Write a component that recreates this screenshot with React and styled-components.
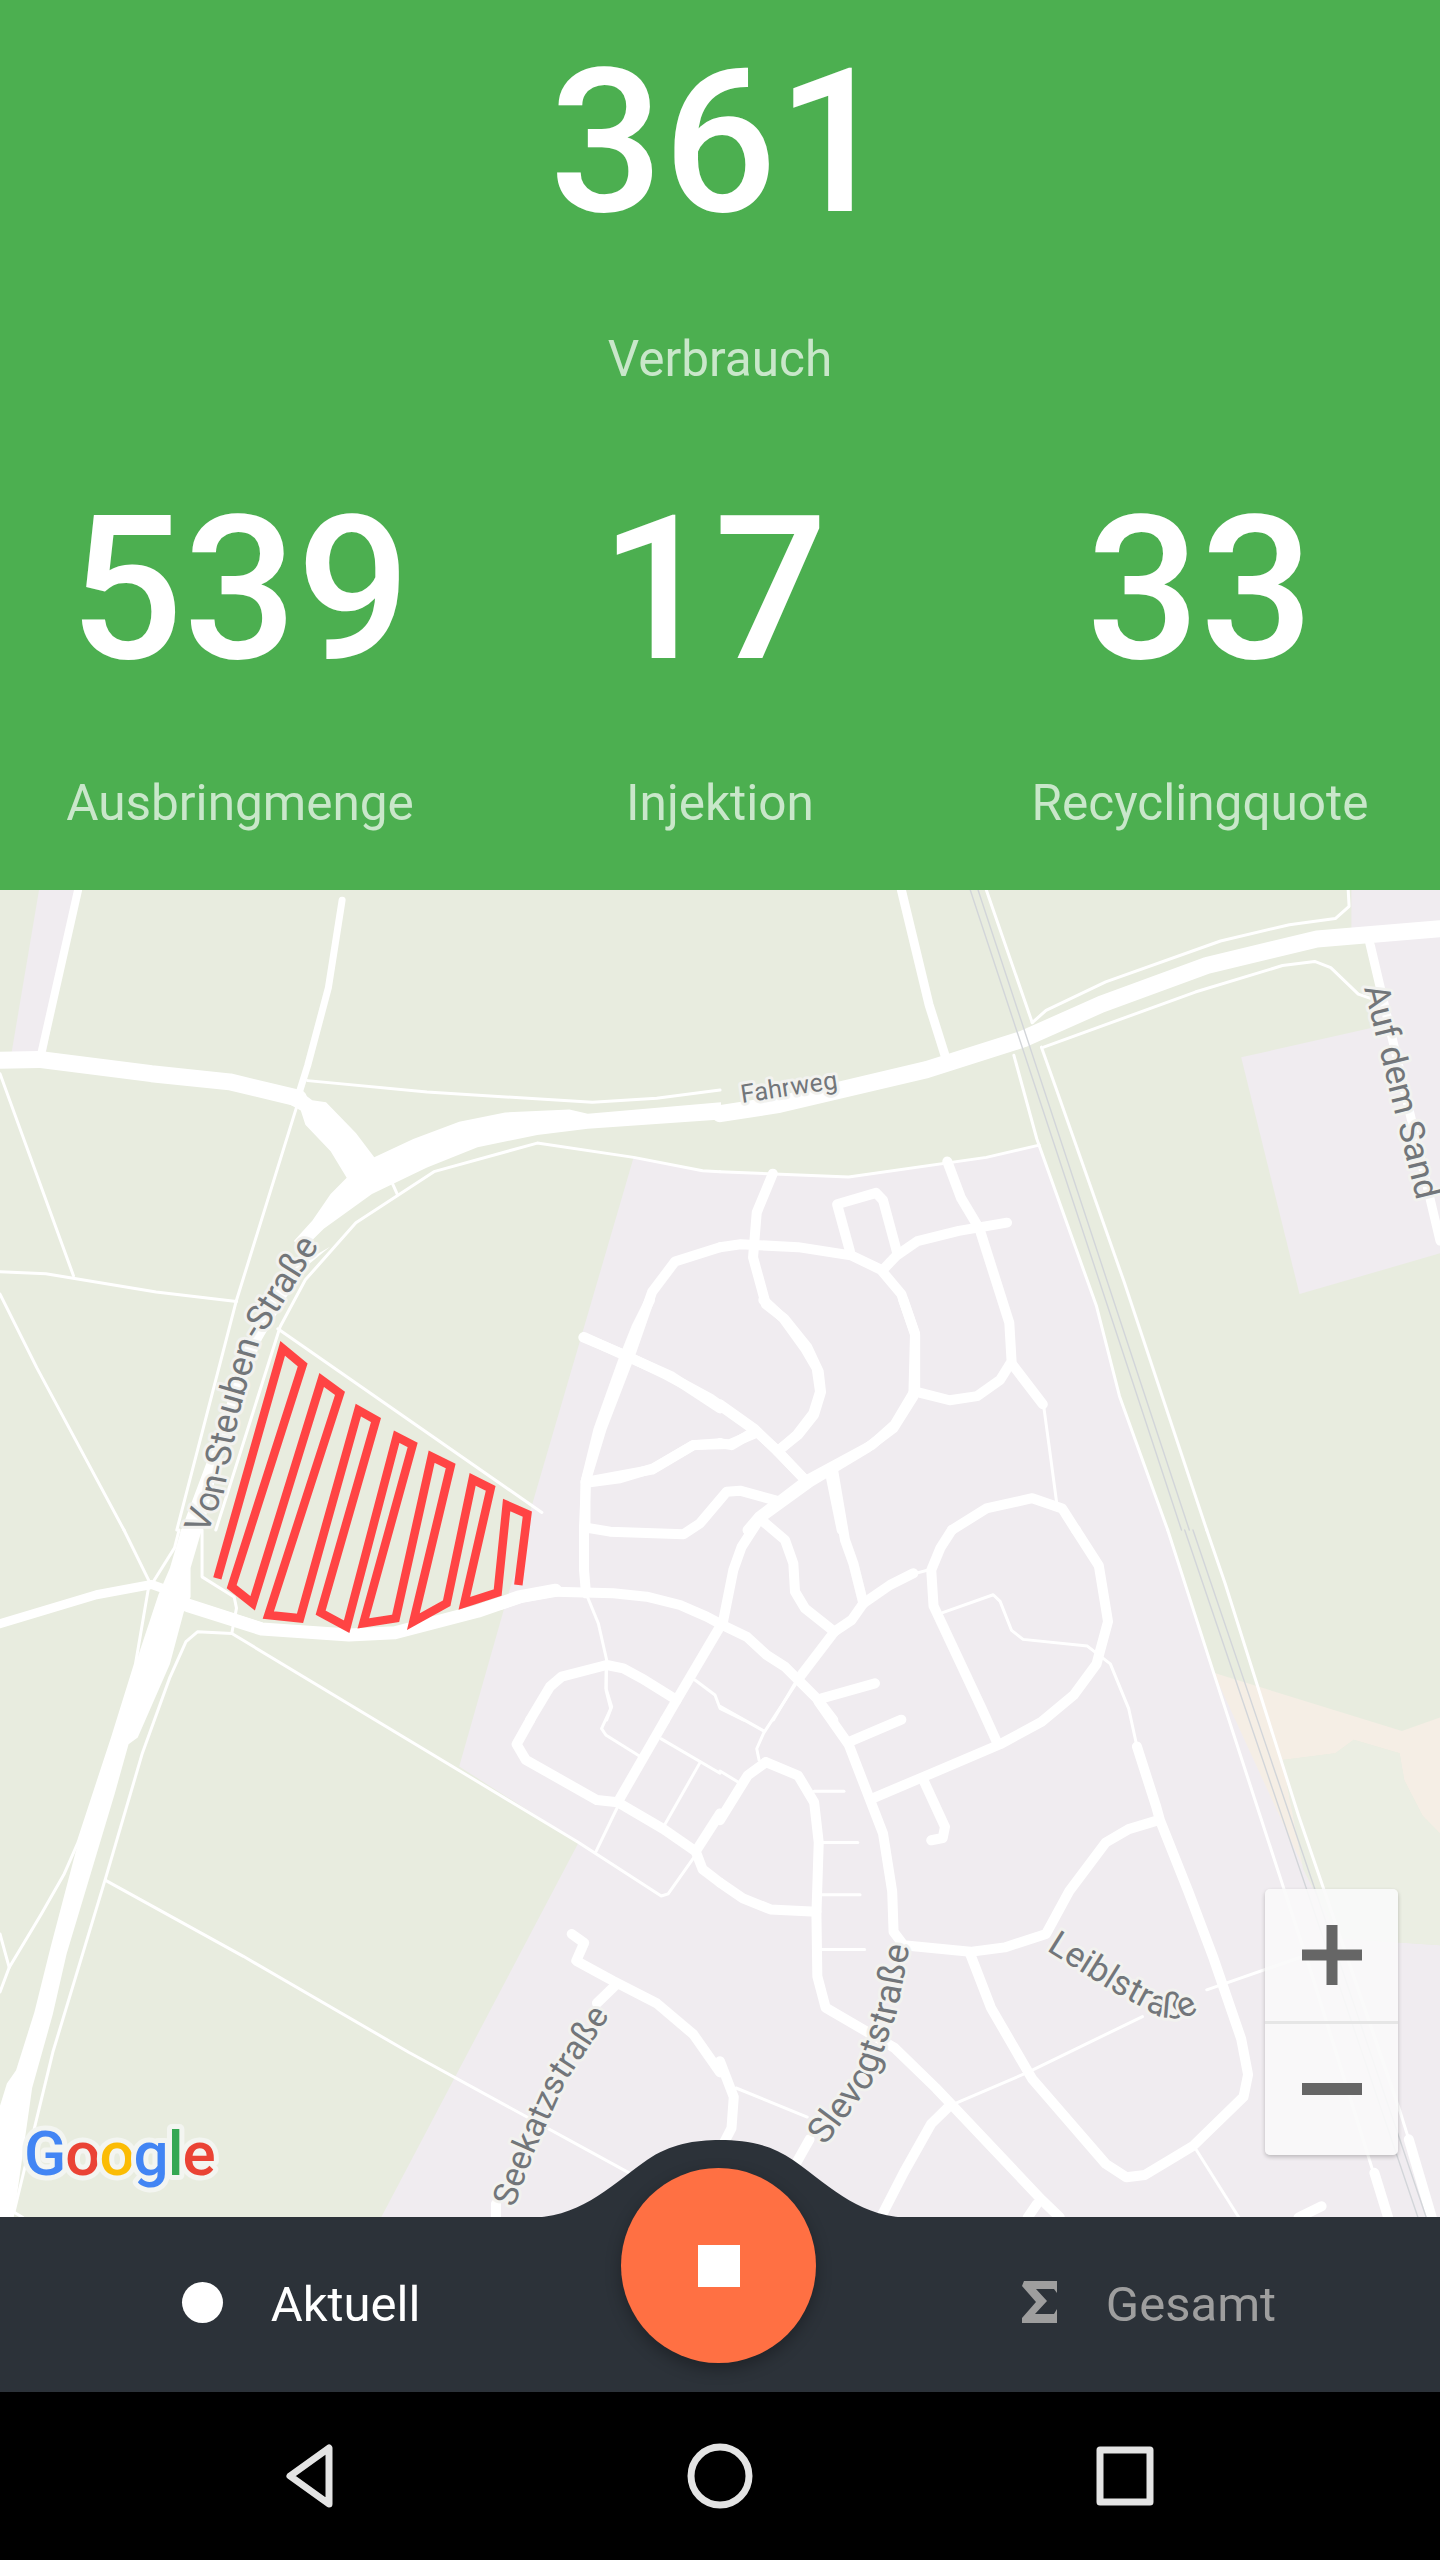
import React from 'react';
import styled, { createGlobalStyle } from 'styled-components';

const GlobalStyle = createGlobalStyle`
  html, body {
    margin: 0;
    padding: 0;
    background: #000;
  }
  body {
    font-family: Roboto, "Liberation Sans", sans-serif;
  }
`;

const Page = styled.div`
  width: 1440px;
  height: 2560px;
  display: flex;
  flex-direction: column;
  overflow: hidden;
`;

/* ---------- stats header ---------- */

const Header = styled.header`
  height: 890px;
  box-sizing: border-box;
  padding-top: 26px;
  background: #4caf50;
  display: grid;
  grid-template-columns: repeat(3, 480px);
  grid-template-rows: 447px 1fr;
  justify-items: center;
`;

const Stat = styled.div`
  grid-column: ${p => p.$column};
  grid-row: ${p => p.$row};
  display: flex;
  flex-direction: column;
  align-items: center;
  white-space: nowrap;
`;

const Value = styled.div`
  font-size: 200px;
  font-weight: 500;
  line-height: 234px;
  color: #fff;
  margin-bottom: ${p => p.$gap}px;
  padding-right: ${p => p.$nudge || 0}px;
`;

const Label = styled.div`
  font-size: 49.5px;
  line-height: 56px;
  color: #c9e7ca;
`;

/* ---------- map ---------- */

const MapArea = styled.section`
  position: relative;
  height: 1327px;
  background: #e8ecdf;
  overflow: hidden;
`;

const MapSvg = styled.svg`
  display: block;
  width: 1440px;
  height: 1327px;
`;

const Area = styled.polygon`
  fill: ${p => p.$fill || '#f0ecf0'};
`;

const Road = styled.polyline`
  fill: none;
  stroke: ${p => p.$color || '#fff'};
  stroke-width: ${p => p.$w}px;
  stroke-linecap: round;
  stroke-linejoin: round;
  vector-effect: non-scaling-stroke;
`;

const Wide = styled.polygon`
  fill: #fff;
`;

const Track = styled.polyline`
  fill: none;
  stroke: #ff4444;
  stroke-width: 8.5px;
  stroke-linejoin: miter;
  stroke-miterlimit: 3;
  vector-effect: non-scaling-stroke;
`;

const StreetName = styled.text`
  font-family: Roboto, "Liberation Sans", sans-serif;
  font-size: ${p => p.$size}px;
  fill: #72767a;
  stroke: #f2f2ef;
  stroke-width: 6px;
  stroke-linejoin: round;
  paint-order: stroke;
`;

const GoogleMark = styled.text`
  font-family: Roboto, "Liberation Sans", sans-serif;
  font-size: 62px;
  font-weight: 500;
  letter-spacing: -1px;
  stroke: #f3f5f1;
  stroke-width: 10px;
  stroke-linejoin: round;
  paint-order: stroke;
`;

const ZoomBox = styled.div`
  position: absolute;
  right: 42px;
  bottom: 62px;
  width: 133px;
  height: 266px;
  border-radius: 5px;
  background: rgba(250, 250, 250, 0.9);
  box-shadow: 0 2px 4px rgba(0, 0, 0, 0.22);
  display: flex;
  flex-direction: column;
`;

const ZoomButton = styled.div`
  flex: 1;
  display: flex;
  align-items: center;
  justify-content: center;
  color: #666;
  & + & {
    border-top: 3px solid #e6e6e6;
  }
`;

/* ---------- bottom bar ---------- */

const BottomBar = styled.nav`
  position: relative;
  height: 175px;
  background: #2c3239;
  display: grid;
  grid-template-columns: 602px 1fr 582px;
  align-items: center;
`;

const Hump = styled.svg`
  position: absolute;
  left: 525px;
  top: -77px;
  width: 390px;
  height: 78px;
`;

const Tab = styled.div`
  grid-column: ${p => p.$column};
  display: flex;
  align-items: center;
  justify-content: center;
  gap: 48px;
  font-size: 49px;
  line-height: 56px;
  color: ${p => (p.$active ? '#fff' : '#9e9e9e')};
`;

const Dot = styled.span`
  width: 41px;
  height: 41px;
  border-radius: 50%;
  background: currentColor;
  margin-top: -5px;
`;

const TabIcon = styled.svg`
  width: 36px;
  height: 42px;
  margin-top: -5px;
  fill: currentColor;
`;

const Fab = styled.button`
  position: absolute;
  left: 621px;
  top: -49px;
  width: 195px;
  height: 195px;
  border: 0;
  padding: 0;
  border-radius: 50%;
  background: #ff7043;
  box-shadow: 0 6px 16px rgba(0, 0, 0, 0.3);
  display: flex;
  align-items: center;
  justify-content: center;
`;

const StopMark = styled.span`
  width: 42px;
  height: 42px;
  background: #fff;
`;

/* ---------- android nav ---------- */

const SystemNav = styled.div`
  height: 168px;
  background: #000;
  display: flex;
  align-items: center;
  justify-content: center;
  gap: 333px;
`;

const NavIcon = styled.svg`
  width: 72px;
  height: 72px;
  fill: none;
  stroke: #e4e4e4;
  stroke-width: 7px;
  stroke-linejoin: round;
`;

/* map drawing: points were read off crops of the map, each with its own origin and scale */

const A = { x: 0, y: 890, sx: 0.4592, sy: 0.4082 };
const B = { x: 720, y: 890, sx: 0.4592, sy: 0.4082 };
const C = { x: 0, y: 1530, sx: 0.4592, sy: 0.4464 };
const D = { x: 720, y: 1530, sx: 0.4592, sy: 0.4464 };
const E = { x: 130, y: 1240, sx: 1 / 3, sy: 1 / 3 };
const F = { x: 500, y: 1300, sx: 1 / 3, sy: 1 / 3 };

const Tile = ({ t, children }) => (
  <g transform={`translate(${t.x} ${t.y}) scale(${t.sx} ${t.sy})`}>{children}</g>
);

const AREAS = [
  [A, '85,0 165,0 100,400 25,400'],
  [A, '1380,655 1530,690 1568,690 1570,1570 1142,1570'],
  [B, '-2,690 280,703 580,655 695,625 820,1020 870,1240 975,1570 -2,1570'],
  [B, '1375,0 1568,0 1568,85 1375,95'],
  [B, '1425,120 1568,110 1568,890 1262,990 1135,410 1430,335'],
  [C, '1150,0 1105,150 1000,530 1260,700 830,1540 1570,1540 1570,0'],
  [D, '0,-2 975,-2 1075,320 1180,360 1290,800 1350,915 1568,930 1568,1540 0,1540'],
  [D, '1075,320 1485,450 1568,420 1568,680 1530,640 1490,560 1480,500 1380,470 1340,500 1225,515 1240,600 1270,760 1290,800', '#f5eee5'],
  [D, '1225,515 1340,500 1380,470 1480,500 1490,560 1530,640 1568,680 1568,930 1350,915 1290,800 1270,760 1240,600', '#ebeee3'],
];

const WIDE = [
  [A, '650,490 680,515 710,520 775,595 815,655 900,610 1000,568 1100,545 1240,538 1280,548 1570,520 1570,562 1280,585 1170,600 1040,630 930,680 810,745 705,830 660,880 640,860 680,810 720,745 755,705 720,640 665,575 655,540 630,525'],
  [C, '395,-2 440,-2 415,85 415,150 400,185 370,300 300,465 280,480 250,590 145,950 115,1085 70,1250 30,1540 0,1540 0,1290 15,1240 35,1210 75,1080 110,935 165,720 250,450 295,300 345,145 370,85'],
  [E, '150,880 215,880 260,700 330,470 395,300 470,170 540,70 600,20 480,90 395,210 335,340 270,560'],
];

const ROADS = [
  // top left
  [A, 17, '0,417 85,415 330,450 500,470 650,510'],
  [A, 8, '170,0 90,400'],
  [A, 7, '745,25 715,240 670,430 652,495'],
  [A, 3, '0,450 160,945'],
  [A, 3, '0,935 100,940 340,985 515,1008'],
  [A, 3, '645,535 515,1005 385,1568'],
  [A, 3, '0,990 80,1170 270,1568'],
  [A, 3, '670,467 930,495 1290,520 1430,510 1568,490'],
  [A, 3, '1568,690 1530,688 1380,655 1170,620 945,690 775,815 665,955 610,1070 470,1568'],
  [A, 3, '855,720 865,745'],
  [A, 3, '605,1075 1180,1525'],
  [A, 10, '1272,1095 1360,1140 1460,1190 1568,1270'],
  [A, 10, '1275,1568 1275,1450 1310,1320 1375,1130 1420,985 1470,910 1568,875'],
  [A, 10, '1275,1450 1420,1420 1510,1360 1568,1355'],
  // top right
  [B, 17, '0,548 130,525 450,440 660,365 830,280 1060,185 1300,120 1568,95'],
  [B, 9, '395,0 455,280 490,405'],
  [B, 3, '580,0 680,325'],
  [B, 3, '680,325 710,295 840,225 1090,125 1240,85 1340,70 1370,40 1368,0'],
  [B, 3, '705,385 1035,250 1225,185 1295,175 1330,190 1390,255 1415,265'],
  [B, 3, '640,405 690,610 820,1020 870,1240 975,1568'],
  [B, 3, '700,385 730,480 880,960 1060,1568'],
  [B, 3, '0,690 280,703 580,655 695,625'],
  [B, 9, '1415,130 1568,860'],
  [B, 10, '0,875 45,868 170,875 285,895 350,930 395,990 425,1090 425,1225 380,1310 330,1360 190,1445 85,1535 60,1568'],
  [B, 10, '115,695 80,790 72,900 100,1015 140,1050 190,1120 215,1180 220,1230 205,1285 170,1335 125,1375'],
  [B, 10, '0,1260 75,1320 125,1375 190,1450'],
  [B, 10, '0,1355 25,1360 70,1330'],
  [B, 10, '495,665 525,755 565,830 630,1060 635,1155 610,1200 560,1240 500,1250 430,1230'],
  [B, 10, '635,1160 703,1260'],
  [B, 3, '705,1265 720,1390 733,1500'],
  [B, 10, '355,930 385,895 430,860 520,835 625,815'],
  [B, 10, '283,885 255,770 340,742 355,760 385,885'],
  [B, 10, '240,1430 265,1568'],
  [B, 10, '505,1568 580,1515 680,1490 745,1515 775,1568'],
  // lower left
  [C, 9, '0,210 210,145 330,122 380,140'],
  [C, 13, '410,170 570,222 760,235 860,230 1040,182 1130,150 1210,135'],
  [C, 3, '405,155 570,210'],
  [C, 3, '440,0 440,105 510,150 515,175 505,230'],
  [C, 3, '505,232 430,228 405,250 370,330 310,500 230,780 115,1170 30,1530'],
  [C, 3, '505,232 1260,700 1440,820 1455,815 1510,735'],
  [C, 3, '1297,722 1345,620'],
  [C, 3, '230,785 530,955 890,1170 1370,1440'],
  [C, 3, '330,122 380,40 390,0'],
  [C, 3, '325,120 295,300 245,465 170,700 140,770 90,860 20,980 0,1035'],
  [C, 3, '0,905 20,980'],
  [C, 3, '270,0 325,115'],
  [C, 3, '25,1525 50,1540'],
  [C, 10, '1245,905 1272,925 1255,965 1335,1010 1430,1060 1510,1130 1568,1215'],
  [C, 10, '1340,1020 1300,1060'],
  [C, 10, '1080,1510 1080,1540'],
  [C, 10, '1155,425 1125,480 1145,515 1300,605 1345,610 1445,670 1515,720 1530,760 1568,790'],
  [C, 10, '1448,426 1345,610'],
  [C, 10, '1515,720 1568,635'],
  [C, 3, '1440,468 1568,545'],
  [C, 3, '1525,520 1445,665'],
  [C, 3, '1320,300 1320,360 1330,400 1310,445 1320,460 1395,508'],
  // town centre
  [F, 10, '250,112 375,165 500,225 630,295 770,395 830,450 925,550'],
  [F, 10, '450,0 410,80 370,180 295,390 258,540 252,680 252,810 258,880'],
  [F, 10, '258,548 360,535 460,505 580,435 690,432 765,400'],
  [F, 10, '258,683 330,695 550,703 600,670 680,575 720,572 840,605'],
  [F, 10, '790,0 850,55 915,145 950,205 960,275 940,340 890,405 838,450'],
  [F, 10, '780,655 925,550 1100,445 1180,385 1240,290 1245,100 1210,0'],
  [F, 10, '780,655 725,740 700,810 667,975'],
  [F, 10, '790,665 855,720 880,790 885,875 915,925 1003,995'],
  [F, 10, '1003,995 1055,960 1090,910 1060,790 1035,720 1000,515'],
  [F, 10, '1090,910 1170,855 1240,820'],
  [F, 10, '0,915 70,892 165,875 340,880 440,890 540,915 620,950 667,975 740,1010 800,1065 855,1100 950,1195 1000,1260'],
  [F, 10, '660,980 530,1200 495,1260'],
  [F, 10, '1003,995 900,1130'],
  [F, 3, '885,1150 820,1260'],
  [F, 10, '965,1195 1125,1150'],
  [F, 10, '90,1260 150,1160 185,1130 320,1095 370,1105 425,1135 530,1200'],
  [F, 3, '260,885 295,970 320,1080 318,1165 335,1220 320,1260'],
  [F, 3, '585,1140 645,1185 660,1225 730,1260'],
  // lower right
  [D, 10, '505,0 480,40 460,90 465,170 570,400 605,480'],
  [D, 10, '775,0 825,80 845,205 820,300 770,370 700,430 610,480 450,550 335,600'],
  [D, 3, '415,100 460,88'],
  [D, 3, '485,185 595,145 610,160 635,225 660,245 800,260 850,300 890,400 908,485'],
  [D, 10, '908,485 950,620 958,650 1020,810 1075,960 1135,1140 1150,1220 1140,1270 1030,1380 925,1445 885,1450 840,1420 680,1230 590,1070 545,950'],
  [D, 10, '955,650 890,670 840,700 760,810 710,905 620,935 545,945 400,930 378,900 375,810 355,680 280,480 215,385'],
  [D, 10, '445,565 490,665 485,690 460,695'],
  [D, 10, '280,475 395,425'],
  [D, 10, '100,520 170,550 205,610 215,700 210,860 212,1000 230,1070 380,1160 470,1250 700,1500 740,1540'],
  [D, 10, '100,520 60,550 0,650'],
  [D, 10, '0,790 50,825 110,850 210,855'],
  [D, 3, '205,585 270,585'],
  [D, 3, '220,700 300,700'],
  [D, 3, '220,817 305,817'],
  [D, 3, '222,940 315,940'],
  [D, 3, '165,345 95,455 80,490 85,515'],
  [D, 3, '0,395 95,450'],
  [D, 3, '0,540 40,565'],
  [D, 3, '920,1090 670,1215 500,1290'],
  [D, 3, '1060,1030 1270,955'],
  [D, 10, '350,1540 400,1440 460,1330 500,1290'],
  [D, 10, '690,1510 670,1540'],
  [D, 3, '1035,1385 1130,1540'],
  [D, 10, '1260,1540 1310,1515'],
  [D, 3, '35,1250 190,1315'],
  [D, 10, '165,1420 195,1365'],
  [D, 10, '0,1190 30,1270 25,1340 10,1370'],
  [D, 10, '1425,1440 1455,1540'],
  [D, 10, '1500,1365 1550,1540'],
  [D, 3, '1480,1300 1500,1365'],
  [D, 3, '975,0 1075,320 1290,1000 1420,1430'],
  [D, 3, '1060,0 1100,120 1260,640 1480,1300'],
];

const RAILS = [
  [B, '545,0 1005,1568'],
  [B, '562,0 1022,1568'],
  [D, '1012,0 1520,1540'],
  [D, '1030,0 1538,1540'],
];

const TRACK =
  '262,1015 458,325 518,375 305,1040 368,1090 575,420 630,460 415,1125 510,1135 685,510 738,540 572,1118 650,1160 800,590 848,615 700,1150 797,1135 905,650 962,678 850,1145 950,1090 1028,718 1082,745 1003,1090 1103,1058 1130,795 1192,822 1165,1035';

const STREETS = [
  { id: 'fahrweg', size: 25.5, text: 'Fahrweg', d: 'M742 1103 L840 1088' },
  { id: 'sand', size: 35, text: 'Auf dem Sand', d: 'M1364 988 L1429 1250' },
  { id: 'steuben', size: 35.5, text: 'Von-Steuben-Straße', d: 'M207 1535 L225 1487 L240 1410 L260 1340 L287 1297 L325 1236' },
  { id: 'seekatz', size: 34, text: 'Seekatzstraße', d: 'M514 2208 L533 2155 L565 2083 L614 2009' },
  { id: 'slevogt', size: 36, text: 'Slevogtstraße', d: 'M825 2146 L872 2083 L897 2012 L913 1928' },
  { id: 'leibl', size: 35, text: 'Leiblstraße', d: 'M1046 1950 L1110 1990 L1160 2017 L1183 2019 L1222 2000' },
];

const LOGO = [
  ['G', '#4285f4'],
  ['o', '#ea4335'],
  ['o', '#fbbc05'],
  ['g', '#4285f4'],
  ['l', '#34a853'],
  ['e', '#ea4335'],
];

const MapDrawing = () => (
  <MapSvg viewBox="0 890 1440 1327">
    <defs>
      {STREETS.map(s => (
        <path key={s.id} id={s.id} d={s.d} />
      ))}
    </defs>
    {AREAS.map(([t, points, fill], i) => (
      <Tile key={i} t={t}>
        <Area points={points} $fill={fill} />
      </Tile>
    ))}
    {WIDE.map(([t, points], i) => (
      <Tile key={i} t={t}>
        <Wide points={points} />
      </Tile>
    ))}
    {ROADS.map(([t, w, points], i) => (
      <Tile key={i} t={t}>
        <Road points={points} $w={w} />
      </Tile>
    ))}
    {RAILS.map(([t, points], i) => (
      <Tile key={i} t={t}>
        <Road points={points} $w={1.4} $color="#d2d5d9" />
      </Tile>
    ))}
    <Tile t={E}>
      <Track points={TRACK} />
    </Tile>
    {STREETS.map(s => (
      <StreetName key={s.id} $size={s.size}>
        <textPath href={`#${s.id}`}>{s.text}</textPath>
      </StreetName>
    ))}
    <GoogleMark x="24" y="2175">
      {LOGO.map(([letter, color], i) => (
        <tspan key={i} fill={color}>
          {letter}
        </tspan>
      ))}
    </GoogleMark>
  </MapSvg>
);

export default function App() {
  return (
    <Page>
      <GlobalStyle />
      <Header>
        <Stat $column={2} $row={1}>
          <Value $gap={71}>361</Value>
          <Label>Verbrauch</Label>
        </Stat>
        <Stat $column={1} $row={2}>
          <Value $gap={68}>539</Value>
          <Label>Ausbringmenge</Label>
        </Stat>
        <Stat $column={2} $row={2}>
          <Value $gap={68} $nudge={12}>17</Value>
          <Label>Injektion</Label>
        </Stat>
        <Stat $column={3} $row={2}>
          <Value $gap={68}>33</Value>
          <Label>Recyclingquote</Label>
        </Stat>
      </Header>

      <MapArea>
        <MapDrawing />
        <ZoomBox>
          <ZoomButton>
            <svg width="60" height="60" viewBox="0 0 60 60" fill="currentColor">
              <path d="M24.5 0h11v24.5H60v11H35.500V60h-11V35.500H0v-11h24.500z" />
            </svg>
          </ZoomButton>
          <ZoomButton>
            <svg width="60" height="12" viewBox="0 0 60 12" fill="currentColor">
              <path d="M0 0h60v12H0z" />
            </svg>
          </ZoomButton>
        </ZoomBox>
      </MapArea>

      <BottomBar>
        <Hump viewBox="0 0 390 78">
          <path
            fill="#2c3239"
            d="M0 78 C55 78 80 50 122 20 C145 4 170 0 195 0 C220 0 245 4 268 20 C310 50 335 78 390 78 Z"
          />
        </Hump>
        <Tab $column="1" $active>
          <Dot />
          Aktuell
        </Tab>
        <Fab aria-label="Stop">
          <StopMark />
        </Fab>
        <Tab $column="3">
          <TabIcon viewBox="0 0 36 42">
            <path d="M2 0h33v12l-3-4H14l11 12-12 13h19l3-5v14H0v-5l14-16L0 5z" />
          </TabIcon>
          Gesamt
        </Tab>
      </BottomBar>

      <SystemNav>
        <NavIcon viewBox="0 0 72 72">
          <path d="M50 8v56L11 36z" />
        </NavIcon>
        <NavIcon viewBox="0 0 72 72">
          <circle cx="36" cy="36" r="29" />
        </NavIcon>
        <NavIcon viewBox="0 0 72 72">
          <rect x="11" y="10" width="50" height="52" />
        </NavIcon>
      </SystemNav>
    </Page>
  );
}
